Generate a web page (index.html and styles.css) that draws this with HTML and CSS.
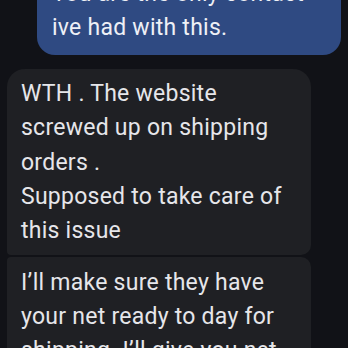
FILE: index.html
```html
<!DOCTYPE html>
<html>
<head>
<meta charset="utf-8">
<link rel="stylesheet" href="styles.css">
</head>
<body>
<div class="chat">
  <div class="bubble out">You are the only contact<br>ive had with this.</div>
  <div class="group">
    <div class="bubble in first">WTH . The website<br>screwed up on shipping<br>orders .<br>Supposed to take care of<br>this issue</div>
    <div class="bubble in next">I’ll make sure they have<br>your net ready to day for<br>shipping. I’ll give you net</div>
  </div>
</div>
</body>
</html>
```
FILE: styles.css
```css
html, body {
  margin: 0;
  padding: 0;
  background: #111217;
  overflow: hidden;
}
.chat {
  display: flex;
  flex-direction: column;
  gap: 14px;
  padding: 0 7px;
  margin-top: -32px;
  font-family: Roboto, "Noto Sans", sans-serif;
  font-size: 23px;
  letter-spacing: 0.25px;
  line-height: 34.3px;
  color: #e6e6ea;
}
.bubble {
  padding: 8.5px 14px 6.5px 14px;
}
.out {
  align-self: flex-end;
  width: 304px;
  box-sizing: border-box;
  padding: 8.5px 15px 9.5px 15px;
  background: #2f4a82;
  border-radius: 18px;
  color: #eef0f6;
}
.group {
  display: flex;
  flex-direction: column;
  gap: 2px;
}
.in {
  width: 304px;
  box-sizing: border-box;
  background: #1f2024;
}
.first {
  border-radius: 18px 18px 10px 4px;
}
.next {
  border-radius: 4px 10px 18px 18px;
}
```
